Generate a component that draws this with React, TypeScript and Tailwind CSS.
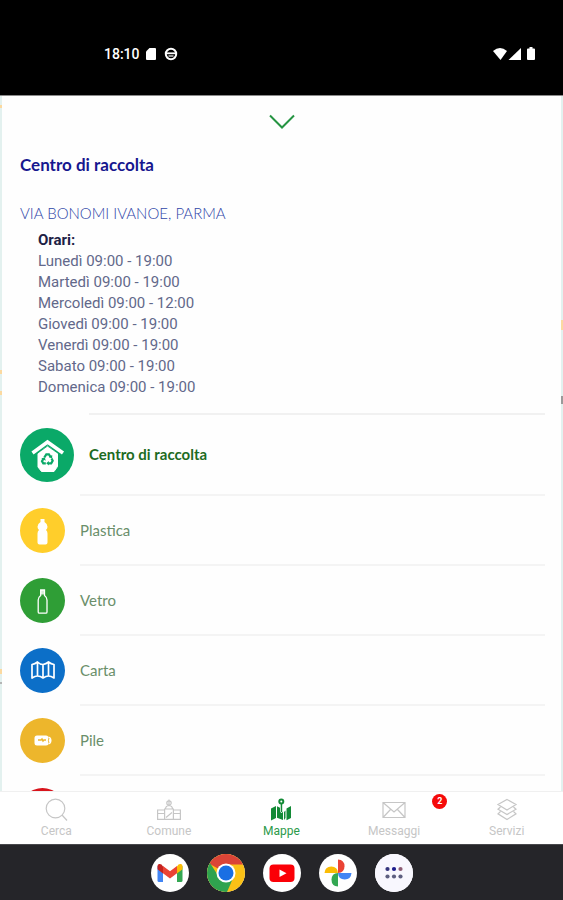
import type { ReactNode } from "react";

const HOURS = [
  "Lunedì 09:00 - 19:00",
  "Martedì 09:00 - 19:00",
  "Mercoledì 09:00 - 12:00",
  "Giovedì 09:00 - 19:00",
  "Venerdì 09:00 - 19:00",
  "Sabato 09:00 - 19:00",
  "Domenica 09:00 - 19:00",
];

function StatusBar() {
  return (
    <header className="flex h-24 shrink-0 items-center border-b border-[#8a8a8a] bg-black pl-[104px] pr-[27px] pt-3 text-white">
      <span className="font-['Roboto',sans-serif] text-sm font-medium">18:10</span>
      <svg className="ml-[6px] h-3 w-[10px]" viewBox="0 0 10 12" fill="#fff" aria-hidden="true">
        <path d="M3.5 0H9q1 0 1 1v10q0 1-1 1H1q-1 0-1-1V3.5z" />
      </svg>
      <svg className="ml-2 size-[14px]" viewBox="0 0 14 14" fill="none" stroke="#fff" aria-hidden="true">
        <circle cx="7" cy="7" r="5.2" strokeWidth="2" />
        <path d="M2 6.3h10" strokeWidth="1.8" />
        <path d="M4.500 9h5" strokeWidth="1.2" />
      </svg>
      <svg className="ml-auto h-[14px] w-[43px]" viewBox="0 0 43 14" fill="#fff" aria-hidden="true">
        <path d="M0 4Q7-2 14 4L7.5 13z" />
        <path d="M28 1v12H15.500z" />
        <path d="M35 1.500h1.500V0h3v1.500H41q1 0 1 1V12q0 1-1 1h-6q-1 0-1-1V2.500q0-1 1-1z" />
      </svg>
    </header>
  );
}

function MapBackdrop() {
  return (
    <svg className="absolute inset-0 h-full w-full" aria-hidden="true">
      <rect width="100%" height="100%" fill="#e3f1ef" />
      <g fill="#fbd9a0">
        <rect y="9" width="3" height="3" />
        <rect y="274" width="3" height="4" />
        <rect y="295" width="3" height="4" />
        <rect y="573" width="3" height="5" />
        <rect x="99%" y="224" width="8" height="10" />
      </g>
      <rect y="586" width="3" height="2" fill="#b5b5b5" />
      <rect x="99%" y="300" width="8" height="8" fill="#9a9a9a" />
    </svg>
  );
}

function CentreIcon() {
  return (
    <svg className="size-[54px] shrink-0" viewBox="0 0 54 54" aria-hidden="true">
      <circle cx="27" cy="27" r="27" fill="#0aa968" />
      <path d="M27.500 18l10 7.500v13L34 43.500H21.500L18 39V25.500z" fill="#fff" strokeLinejoin="round" stroke="#fff" />
      <path d="M12.500 25L27.500 14l15.500 11" fill="none" stroke="#fff" strokeWidth="3.600" />
      <path d="M16 26.200l11.500-8.200L39.500 26.200" fill="none" stroke="#0aa968" strokeWidth="0.900" />
      <g fill="none" stroke="#0aa968" strokeWidth="2.200">
        <path d="M24.300 29.500l2-3.200h2.600l1.800 3" />
        <path d="M31.500 30.500l1.200 2.300-1.500 2.600h-3.200" />
        <path d="M25.800 35.400h-2.500l-1.300-2.200 1.500-2.600" />
      </g>
      <path d="M32.200 27v3.600l-3.500-1.500zM28.800 33v4.600l-2.600-2.300zM21.200 30.200l3.700-.8.800 3.400z" fill="#0aa968" />
    </svg>
  );
}

function Disc({ color, children }: { color: string; children?: ReactNode }) {
  return (
    <svg className="size-[45px] shrink-0" viewBox="0 0 45 45" aria-hidden="true">
      <circle cx="22.500" cy="22.500" r="22.500" fill={color} />
      {children}
    </svg>
  );
}

const MATERIALS: { name: string; icon: ReactNode }[] = [
  {
    name: "Plastica",
    icon: (
      <Disc color="#ffce2b">
        <path
          d="M20.500 11h4v3q3 1.800 3 4.800 0 2-1.500 3.200 1.500 1.200 1.500 3.500v9q0 2-2 2h-6q-2 0-2-2v-9q0-2.300 1.500-3.500-1.500-1.200-1.500-3.200 0-3 3-4.800z"
          fill="#fff"
        />
      </Disc>
    ),
  },
  {
    name: "Vetro",
    icon: (
      <Disc color="#2f9e36">
        <path d="M20.700 12h3.800v5.500q2.500 1.800 2.500 4.500v12q0 1.200-1.200 1.200h-6.400q-1.200 0-1.200-1.200V22q0-2.700 2.500-4.500z" fill="none" stroke="#fff" strokeWidth="1.300" />
        <path d="M20.700 12h3.800v4.500h-3.800z" fill="#fff" opacity="0.800" />
      </Disc>
    ),
  },
  {
    name: "Carta",
    icon: (
      <Disc color="#0c6fc8">
        <path
          d="M12 16.500q3-.5 5.500-2.500 2.500 2.500 5.500 2.500 3-.5 5.500-2.500 2.500 2 5.500 2.500V30q-3-2-5.500-2-2.500 0-5.500 2-2.500-2-5.500-2-2.500 0-5.500 2zM17.500 14v14M23 16.500V30M28.500 14v14"
          fill="none"
          stroke="#fff"
          strokeWidth="1.700"
          strokeLinejoin="round"
        />
      </Disc>
    ),
  },
  {
    name: "Pile",
    icon: (
      <Disc color="#edb62c">
        <rect x="14.500" y="17.500" width="14" height="10" rx="2.500" fill="#fff" />
        <path d="M28.500 18.500q3 .5 3 4t-3 4z" fill="#fff" />
        <path d="M29 20q-1.200 2.500 0 5" fill="none" stroke="#edb62c" strokeWidth="0.900" />
        <path d="M18 22h3l1-1 1 2 1-1h2" fill="none" stroke="#edb62c" strokeWidth="1.500" />
      </Disc>
    ),
  },
  { name: "", icon: <Disc color="#d8141c" /> },
];

function Rule({ wide = true }: { wide?: boolean }) {
  return <div className={wide ? "ml-[60px] h-[2px] bg-[#f4f4f4]" : "ml-[69px] h-[2px] bg-[#f1f1f1]"} />;
}

function DetailSheet() {
  return (
    <section className="relative mx-[2px] h-full bg-[#fefefe]">
      <button type="button" aria-label="Chiudi" className="flex h-[52px] w-full items-center justify-center">
        <svg className="h-4 w-[26px]" viewBox="0 0 26 16" fill="none" stroke="#259442" strokeWidth="2" aria-hidden="true">
          <path d="M1 1.500L13 13.500L25 1.500" />
        </svg>
      </button>
      <div className="pl-[18px] pr-4">
        <h1 className="mt-[5px] font-['Lato',sans-serif] text-[17px] leading-6 font-bold text-[#17178f]">Centro di raccolta</h1>
        <h2 className="mt-[26px] font-['Lato',sans-serif] text-[15px] leading-[21px] font-light text-[#3046a8]">
          VIA BONOMI IVANOE, PARMA
        </h2>
        <div className="mt-[6px] mb-[15px] pl-[18px] font-['Roboto',sans-serif] text-[15px] leading-[21px] text-[#62688a]">
          <h3 className="font-bold text-[#1d2145]">Orari:</h3>
          <ul>
            {HOURS.map((line) => (
              <li key={line}>{line}</li>
            ))}
          </ul>
        </div>
        <Rule wide={false} />
        <ul className="font-['Lato',sans-serif]">
          <li>
            <a href="#centro" className="flex h-[79px] items-center gap-[15px] text-[15px] font-bold text-[#1d6b22]">
              <CentreIcon />
              Centro di raccolta
            </a>
            <Rule />
          </li>
          {MATERIALS.map((m) => (
            <li key={m.name}>
              <a href={"#" + m.name} className="flex h-[68px] items-center gap-[15px] text-[15px] text-[#6a8f6a]">
                {m.icon}
                {m.name}
              </a>
              <Rule />
            </li>
          ))}
        </ul>
      </div>
    </section>
  );
}

function NavItem({ label, active, badge, children }: { label: string; active?: boolean; badge?: string; children: ReactNode }) {
  return (
    <a
      href={"#" + label}
      className={
        "relative flex flex-1 flex-col items-center gap-[2px] pt-[6px] font-['Roboto',sans-serif] text-xs leading-[14px] " +
        (active ? "text-[#2c9a4b]" : "text-[#c6c6c6]")
      }
    >
      <svg className="size-6" viewBox="0 0 24 24" fill="none" stroke="currentColor" strokeWidth="1.200" aria-hidden="true">
        {children}
      </svg>
      {label}
      {badge && (
        <span className="absolute top-[2px] right-[3px] flex size-[15px] items-center justify-center rounded-full bg-[#f50a0a] text-[9px] leading-none font-bold text-white">
          {badge}
        </span>
      )}
    </a>
  );
}

function BottomNav() {
  return (
    <nav className="flex h-[53px] shrink-0 border-t border-[#f0f0f0] bg-white">
      <NavItem label="Cerca">
        <circle cx="11.500" cy="10.500" r="9.300" />
        <path d="M18 17l5 5.500" />
      </NavItem>
      <NavItem label="Comune">
        <path d="M.6 12h7v9.400h-7zM16.400 12h7v9.400h-7zM7.600 11h8.800v10.400H7.600zM8.500 11q0-3 3.500-3.500 3.500.5 3.500 3.500M12 1.500v6M.6 15.500H7M17 15.500h6.400M9 19.500l6-5" />
        <circle cx="12" cy="5" r="2.200" />
      </NavItem>
      <NavItem label="Mappe" active>
        <g fill="#138a36" stroke="none">
          <path d="M2 10.500L7 8v12l-5 2.500zM8 8.200l3 1.500v4L12.500 15l1.500-1.300V22l-6-2.200zM15 14l1.500-1.500V20L15 22zM17.500 10.500L22 8v12l-4.500 2.300z" />
          <path d="M11.700 5h1.500v9h-1.500z" />
        </g>
        <circle cx="12.300" cy="3.500" r="2" stroke="#138a36" strokeWidth="2" />
      </NavItem>
      <NavItem label="Messaggi" badge="2">
        <path d="M1 4.500h22v15H1zM1 4.500l11 9.500L23 4.500M1 19.500l7.500-8M23 19.500l-7.500-8" />
      </NavItem>
      <NavItem label="Servizi">
        <path d="M12 1.500l9 5-9 5.500-9-5.500zM5.500 9L3 11.200l9 5.300 9-5.300L18.500 9M5.500 13.500L3 15.800 12 21.500l9-5.700-2.500-2.300" />
      </NavItem>
    </nav>
  );
}

function DockButton({ label, children }: { label: string; children: ReactNode }) {
  return (
    <button type="button" aria-label={label} className="size-[38px] overflow-hidden rounded-full bg-white">
      <svg viewBox="0 0 38 38" className="size-full" aria-hidden="true">
        {children}
      </svg>
    </button>
  );
}

function Dock() {
  return (
    <footer className="flex h-14 shrink-0 items-center justify-center gap-[18px] border-t border-[#48484c] bg-[#252529]">
      <DockButton label="Gmail">
        <path d="M6.500 12v14.500q0 1.500 1.500 1.500h4V16z" fill="#4285f4" />
        <path d="M31.500 12v14.500q0 1.500-1.500 1.500h-4V16z" fill="#34a853" />
        <path d="M26 12.500v7l5.500-4.200V12q0-1.500-1.500-2-1.500-.3-2.500.6z" fill="#fbbc04" />
        <path d="M12 12.500v7l-5.500-4.200V12q0-1.500 1.500-2 1.500-.3 2.500.6z" fill="#c5221f" />
        <path d="M12 12l7 5.300 7-5.300v7.300l-7 5.200-7-5.200z" fill="#ea4335" />
      </DockButton>
      <DockButton label="Chrome">
        <rect width="38" height="38" fill="#fbc116" />
        <path d="M19 19L1 9V-1h37v11.500H19z" fill="#db4437" />
        <path d="M0 7.500L3 9l9 14 7 5-6 12H-1z" fill="#2fa34f" />
        <path d="M26.300 23.500L20 38h-7l4-10z" fill="#2fa34f" />
        <circle cx="19" cy="19" r="9.500" fill="#fff" />
        <circle cx="19" cy="19" r="7.500" fill="#1a6fe3" />
      </DockButton>
      <DockButton label="YouTube">
        <rect x="6.500" y="10.500" width="25" height="17.500" rx="4" fill="#fb0007" />
        <path d="M16.500 15.500l7 3.700-7 3.700z" fill="#fff" />
      </DockButton>
      <DockButton label="Foto">
        <path d="M19 5.500q6.500.5 6.500 6.800T19 19z" fill="#ea4335" />
        <path d="M32.500 19q-.5 6.500-6.800 6.500T19 19z" fill="#4285f4" />
        <path d="M19 32.500q-6.500-.5-6.500-6.800T19 19z" fill="#34a853" />
        <path d="M5.500 19q.5-6.500 6.800-6.500T19 19z" fill="#fbbc04" />
      </DockButton>
      <DockButton label="Tutte le app">
        <rect width="38" height="38" fill="#f8f7fe" />
        <g fill="#5d5f80">
          <circle cx="12.500" cy="15" r="2.100" fill="#33347c" />
          <circle cx="19" cy="15" r="2.100" fill="#1c1b8c" />
          <circle cx="25.500" cy="15" r="2.100" fill="#8c5c75" />
          <circle cx="12.500" cy="22.500" r="2.100" />
          <circle cx="19" cy="22.500" r="2.100" />
          <circle cx="25.500" cy="22.500" r="2.100" />
        </g>
      </DockButton>
    </footer>
  );
}

export default function App() {
  return (
    <div className="flex h-screen flex-col overflow-hidden bg-white">
      <StatusBar />
      <main className="relative min-h-0 flex-1 overflow-hidden">
        <MapBackdrop />
        <DetailSheet />
      </main>
      <BottomNav />
      <Dock />
    </div>
  );
}
